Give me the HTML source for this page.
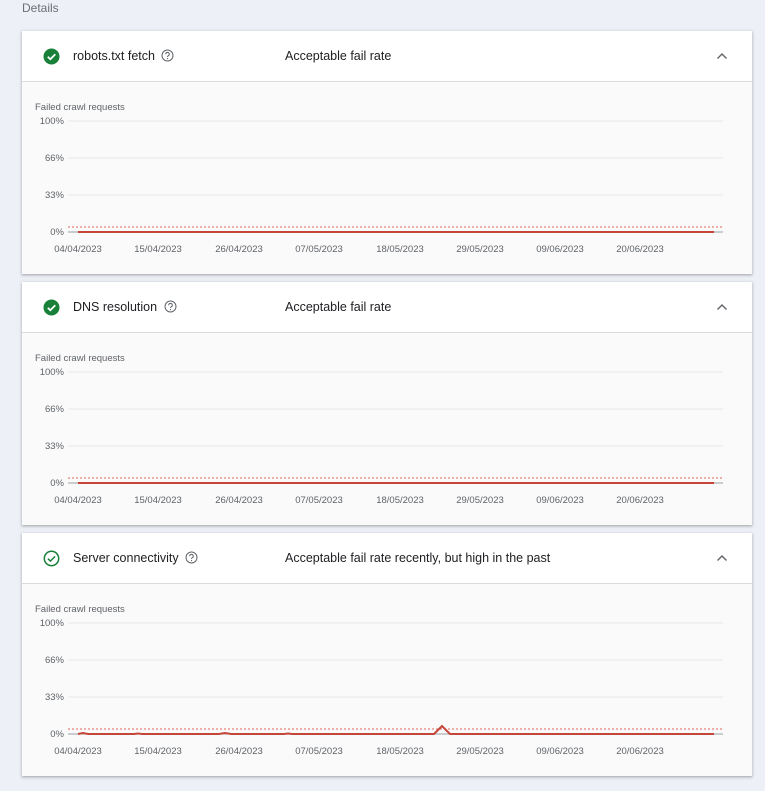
<!DOCTYPE html>
<html><head><meta charset="utf-8"><style>
*{margin:0;padding:0;box-sizing:border-box}
body{width:765px;height:791px;background:#eef0f7;font-family:"Liberation Sans",sans-serif;position:relative;overflow:hidden}
.det{position:absolute;left:22px;top:1px;font-size:12px;color:#6b6f76}
.card{position:absolute;left:22px;width:730px;height:243px;background:#fafafa;box-shadow:0 1px 2px rgba(60,64,67,.3),0 1px 3px 1px rgba(60,64,67,.12)}
.hd{position:absolute;left:0;top:0;width:730px;height:51px;background:#fff;border-bottom:1px solid #dadce0}
.ic{position:absolute;left:21px;top:17px}
.t{position:absolute;left:51px;top:18px;font-size:12.5px;color:#202124}
.s{position:absolute;left:263px;top:18px;font-size:12.5px;color:#202124}
.chev{position:absolute;left:694px;top:21px}
svg.c{position:absolute;left:0;top:51px}
svg text{font-family:"Liberation Sans",sans-serif;font-size:9.5px;fill:#5f6368}
</style></head><body>
<div class="det">Details</div>

<div class="card" style="top:31px">
 <div class="hd">
  <svg class="ic" width="17" height="17" viewBox="0 0 17 17"><circle cx="8.5" cy="8.5" r="8" fill="#188038"/><path d="M4.8 8.7l2.5 2.5 5-5" stroke="#fff" stroke-width="1.8" fill="none"/></svg>
  <div class="t">robots.txt fetch <svg width="13" height="13" viewBox="0 0 13 13" style="vertical-align:-2px;margin-left:3px"><circle cx="6.5" cy="6.5" r="5.5" fill="none" stroke="#5f6368" stroke-width="1"/><path d="M4.7 5.2a1.8 1.8 0 1 1 2.5 1.6c-.5.3-.7.6-.7 1.2" stroke="#5f6368" fill="none" stroke-width="1"/><circle cx="6.5" cy="9.6" r=".6" fill="#5f6368"/></svg></div>
  <div class="s">Acceptable fail rate</div>
  <svg class="chev" width="12" height="8" viewBox="0 0 12 8"><path d="M1.5 6.5L6 2l4.5 4.5" stroke="#5f6368" stroke-width="1.4" fill="none"/></svg>
 </div>
 <svg class="c" width="730" height="192">
  <text x="13" y="28">Failed crawl requests</text>
  <g stroke="#e8e8e8"><line x1="46" y1="39" x2="701" y2="39"/><line x1="46" y1="76" x2="701" y2="76"/><line x1="46" y1="113" x2="701" y2="113"/></g>
  <line x1="46" y1="150" x2="701" y2="150" stroke="#9aa0a6"/>
  <g text-anchor="end"><text x="42" y="42">100%</text><text x="42" y="79">66%</text><text x="42" y="116">33%</text><text x="42" y="153">0%</text></g>
  <line x1="46" y1="145" x2="701" y2="145" stroke="#d93025" stroke-dasharray="2,2" stroke-width="0.8"/>
  <line x1="56" y1="150" x2="692" y2="150" stroke="#c5453a" stroke-width="2"/>
  <g text-anchor="middle"><text x="56" y="170">04/04/2023</text><text x="136" y="170">15/04/2023</text><text x="217" y="170">26/04/2023</text><text x="297" y="170">07/05/2023</text><text x="378" y="170">18/05/2023</text><text x="458" y="170">29/05/2023</text><text x="538" y="170">09/06/2023</text><text x="618" y="170">20/06/2023</text></g>
 </svg>
</div>

<div class="card" style="top:282px">
 <div class="hd">
  <svg class="ic" width="17" height="17" viewBox="0 0 17 17"><circle cx="8.5" cy="8.5" r="8" fill="#188038"/><path d="M4.8 8.7l2.5 2.5 5-5" stroke="#fff" stroke-width="1.8" fill="none"/></svg>
  <div class="t">DNS resolution <svg width="13" height="13" viewBox="0 0 13 13" style="vertical-align:-2px;margin-left:3px"><circle cx="6.5" cy="6.5" r="5.5" fill="none" stroke="#5f6368" stroke-width="1"/><path d="M4.7 5.2a1.8 1.8 0 1 1 2.5 1.6c-.5.3-.7.6-.7 1.2" stroke="#5f6368" fill="none" stroke-width="1"/><circle cx="6.5" cy="9.6" r=".6" fill="#5f6368"/></svg></div>
  <div class="s">Acceptable fail rate</div>
  <svg class="chev" width="12" height="8" viewBox="0 0 12 8"><path d="M1.5 6.5L6 2l4.5 4.5" stroke="#5f6368" stroke-width="1.4" fill="none"/></svg>
 </div>
 <svg class="c" width="730" height="192">
  <text x="13" y="28">Failed crawl requests</text>
  <g stroke="#e8e8e8"><line x1="46" y1="39" x2="701" y2="39"/><line x1="46" y1="76" x2="701" y2="76"/><line x1="46" y1="113" x2="701" y2="113"/></g>
  <line x1="46" y1="150" x2="701" y2="150" stroke="#9aa0a6"/>
  <g text-anchor="end"><text x="42" y="42">100%</text><text x="42" y="79">66%</text><text x="42" y="116">33%</text><text x="42" y="153">0%</text></g>
  <line x1="46" y1="145" x2="701" y2="145" stroke="#d93025" stroke-dasharray="2,2" stroke-width="0.8"/>
  <line x1="56" y1="150" x2="692" y2="150" stroke="#c5453a" stroke-width="2"/>
  <g text-anchor="middle"><text x="56" y="170">04/04/2023</text><text x="136" y="170">15/04/2023</text><text x="217" y="170">26/04/2023</text><text x="297" y="170">07/05/2023</text><text x="378" y="170">18/05/2023</text><text x="458" y="170">29/05/2023</text><text x="538" y="170">09/06/2023</text><text x="618" y="170">20/06/2023</text></g>
 </svg>
</div>

<div class="card" style="top:533px">
 <div class="hd">
  <svg class="ic" width="17" height="17" viewBox="0 0 17 17"><circle cx="8.5" cy="8.5" r="7.2" fill="none" stroke="#188038" stroke-width="1.5"/><path d="M5 8.7l2.4 2.4 4.7-4.7" stroke="#188038" stroke-width="1.5" fill="none"/></svg>
  <div class="t">Server connectivity <svg width="13" height="13" viewBox="0 0 13 13" style="vertical-align:-2px;margin-left:3px"><circle cx="6.5" cy="6.5" r="5.5" fill="none" stroke="#5f6368" stroke-width="1"/><path d="M4.7 5.2a1.8 1.8 0 1 1 2.5 1.6c-.5.3-.7.6-.7 1.2" stroke="#5f6368" fill="none" stroke-width="1"/><circle cx="6.5" cy="9.6" r=".6" fill="#5f6368"/></svg></div>
  <div class="s">Acceptable fail rate recently, but high in the past</div>
  <svg class="chev" width="12" height="8" viewBox="0 0 12 8"><path d="M1.5 6.5L6 2l4.5 4.5" stroke="#5f6368" stroke-width="1.4" fill="none"/></svg>
 </div>
 <svg class="c" width="730" height="192">
  <text x="13" y="28">Failed crawl requests</text>
  <g stroke="#e8e8e8"><line x1="46" y1="39" x2="701" y2="39"/><line x1="46" y1="76" x2="701" y2="76"/><line x1="46" y1="113" x2="701" y2="113"/></g>
  <line x1="46" y1="150" x2="701" y2="150" stroke="#9aa0a6"/>
  <g text-anchor="end"><text x="42" y="42">100%</text><text x="42" y="79">66%</text><text x="42" y="116">33%</text><text x="42" y="153">0%</text></g>
  <line x1="46" y1="145" x2="701" y2="145" stroke="#d93025" stroke-dasharray="2,2" stroke-width="0.8"/>
  <polyline points="56,150 61,149 66,150 112,150 116,149.5 120,150 197,150 203,149 209,150 262,150 266,149.5 270,150 412,150 420,142 428,150 692,150" stroke="#c5453a" stroke-width="2" fill="none"/>
  <g text-anchor="middle"><text x="56" y="170">04/04/2023</text><text x="136" y="170">15/04/2023</text><text x="217" y="170">26/04/2023</text><text x="297" y="170">07/05/2023</text><text x="378" y="170">18/05/2023</text><text x="458" y="170">29/05/2023</text><text x="538" y="170">09/06/2023</text><text x="618" y="170">20/06/2023</text></g>
 </svg>
</div>
</body></html>
